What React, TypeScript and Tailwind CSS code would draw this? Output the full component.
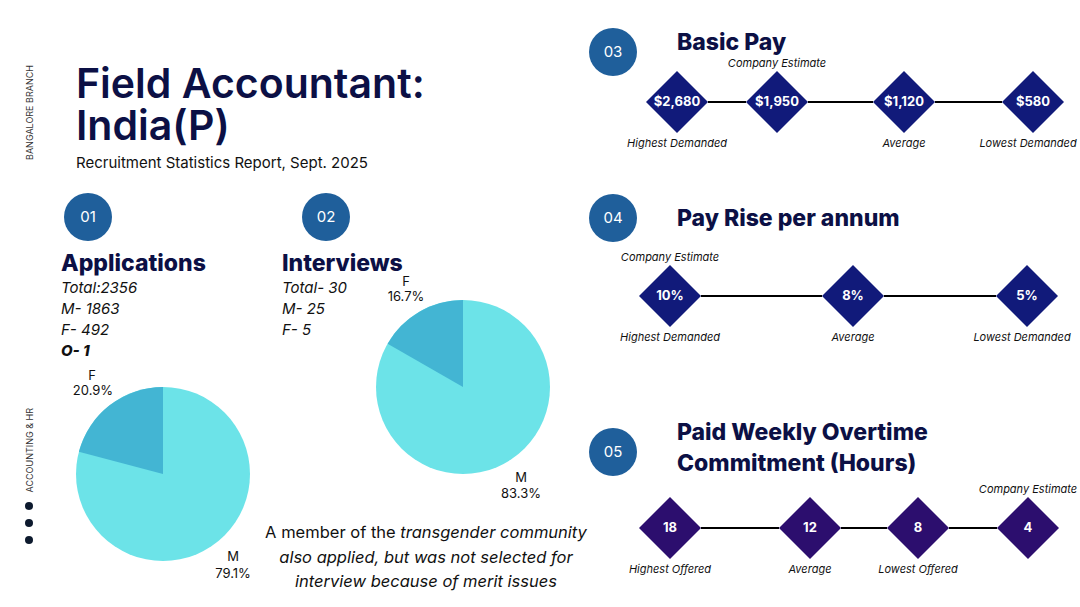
import React from 'react'

type Node = { value: string; above?: string; below?: string; shift?: string }

const Circle = ({ n, className = '' }: { n: string; className?: string }) => (
  <div
    className={`w-[48px] h-[48px] shrink-0 rounded-full bg-[#1f5f9b] flex items-center justify-center text-white text-[15px] ${className}`}
  >
    {n}
  </div>
)

const Timeline = ({ nodes, gaps, color }: { nodes: Node[]; gaps: number[]; color: string }) => (
  <div className="flex items-start">
    {nodes.map((node, i) => (
      <React.Fragment key={i}>
        <div className="w-[62px] shrink-0 flex flex-col items-center">
          <div className="h-[14px] leading-[14px] text-[11px] italic whitespace-nowrap text-[#111]">
            {node.above ?? ''}
          </div>
          <div
            className={`mt-[1px] w-[62px] h-[62px] flex items-center justify-center text-white text-[13px] font-bold [clip-path:polygon(50%_0,100%_50%,50%_100%,0_50%)] ${color}`}
          >
            {node.value}
          </div>
          <div
            className={`mt-[3px] h-[14px] leading-[14px] text-[11px] italic whitespace-nowrap text-[#111] ${node.shift ?? ''}`}
          >
            {node.below ?? ''}
          </div>
        </div>
        {i < gaps.length && (
          <div className="mt-[45px] h-[2px] bg-black shrink-0" style={{ width: gaps[i] }} />
        )}
      </React.Fragment>
    ))}
  </div>
)

const PieOne = () => (
  <svg width="200" height="225" viewBox="0 0 200 225" className="block">
    <circle cx="102" cy="113" r="87" fill="#6ce3e8" />
    <path d="M102,113 L17.87,90.83 A87,87 0 0 1 102,26 Z" fill="#43b5d3" />
    <g fontFamily="Inter, sans-serif" fontSize="13" fill="#111" textAnchor="middle">
      <text x="31" y="19">F</text>
      <text x="32" y="34">20.9%</text>
      <text x="172" y="200">M</text>
      <text x="172" y="217">79.1%</text>
    </g>
  </svg>
)

const PieTwo = () => (
  <svg width="180" height="232" viewBox="0 0 180 232" className="block">
    <circle cx="87" cy="118" r="87" fill="#6ce3e8" />
    <path d="M87,118 L11.6,74.65 A87,87 0 0 1 87,31 Z" fill="#43b5d3" />
    <g fontFamily="Inter, sans-serif" fontSize="13" fill="#111" textAnchor="middle">
      <text x="30" y="17">F</text>
      <text x="30" y="32">16.7%</text>
      <text x="145" y="213">M</text>
      <text x="145" y="229">83.3%</text>
    </g>
  </svg>
)

const App = () => {
  return (
    <div className="w-[1080px] h-[607px] overflow-hidden bg-white flex text-[#111] [font-family:Inter,'Noto_Sans',sans-serif]">
      {/* side strip */}
      <div className="w-[58px] shrink-0 flex flex-col items-center pt-[65px] text-[#333]">
        <div className="[writing-mode:vertical-rl] rotate-180 text-[9px] leading-none whitespace-nowrap">
          BANGALORE BRANCH
        </div>
        <div className="mt-[248px] [writing-mode:vertical-rl] rotate-180 text-[9px] leading-none whitespace-nowrap">
          ACCOUNTING &amp; HR
        </div>
        <div className="mt-[10px] flex flex-col gap-[9px]">
          <span className="w-[8px] h-[8px] rounded-full bg-[#0d1a2e]" />
          <span className="w-[8px] h-[8px] rounded-full bg-[#0d1a2e]" />
          <span className="w-[8px] h-[8px] rounded-full bg-[#0d1a2e]" />
        </div>
      </div>

      {/* left content */}
      <div className="w-[531px] shrink-0 pt-[62px]">
        <div className="pl-[18px]">
          <h1 className="text-[41px] leading-[42px] font-semibold text-[#0c1045]">
            Field Accountant:
            <br />
            India(P)
          </h1>
          <p className="mt-[7px] text-[15px] leading-[20px] text-[#111]">
            Recruitment Statistics Report, Sept. 2025
          </p>
        </div>

        <div className="mt-[20px] flex pl-[3px]">
          {/* applications */}
          <div className="w-[221px] shrink-0">
            <Circle n="01" className="ml-[3px]" />
            <h2 className="mt-[8px] text-[23px] leading-[28px] font-extrabold text-[#0c1045]">Applications</h2>
            <div className="text-[15px] leading-[21px] italic">
              <div>Total:2356</div>
              <div>M- 1863</div>
              <div>F- 492</div>
              <div className="font-extrabold">O- 1</div>
            </div>
            <PieOne />
          </div>

          {/* interviews */}
          <div className="flex-1">
            <Circle n="02" className="ml-[20px]" />
            <h2 className="mt-[8px] text-[23px] leading-[28px] font-extrabold text-[#0c1045]">Interviews</h2>
            <div className="flex items-start">
              <div className="w-[94px] shrink-0 text-[15px] leading-[21px] italic">
                <div>Total- 30</div>
                <div>M- 25</div>
                <div>F- 5</div>
              </div>
              <div className="-mt-[8px]">
                <PieTwo />
              </div>
            </div>
            <p className="mt-[19px] -ml-[26px] w-[340px] text-center text-[16.5px] leading-[24.5px]">
              A member of the <i>transgender community</i>
              <br />
              <i>also applied, but was not selected for</i>
              <br />
              <i>interview because of merit issues</i>
            </p>
          </div>
        </div>
      </div>

      {/* right content */}
      <div className="flex-1 pt-[28px]">
        {/* 03 */}
        <div className="flex">
          <Circle n="03" />
          <div className="ml-[40px]">
            <h2 className="text-[23px] leading-[28px] font-extrabold text-[#0c1045]">Basic Pay</h2>
            <div className="-ml-[31px]">
              <Timeline
                color="bg-[#111a7a]"
                gaps={[38, 65, 67]}
                nodes={[
                  { value: '$2,680', below: 'Highest Demanded' },
                  { value: '$1,950', above: 'Company Estimate' },
                  { value: '$1,120', below: 'Average' },
                  { value: '$580', below: 'Lowest Demanded', shift: '-translate-x-[5px]' },
                ]}
              />
            </div>
          </div>
        </div>

        {/* 04 */}
        <div className="mt-[44px]">
          <div className="flex items-center">
            <Circle n="04" />
            <h2 className="ml-[40px] text-[23px] leading-[28px] font-extrabold text-[#0c1045]">Pay Rise per annum</h2>
          </div>
          <div className="mt-[8px] ml-[50px]">
            <Timeline
              color="bg-[#111a7a]"
              gaps={[121, 112]}
              nodes={[
                { value: '10%', above: 'Company Estimate', below: 'Highest Demanded' },
                { value: '8%', below: 'Average' },
                { value: '5%', below: 'Lowest Demanded', shift: '-translate-x-[5px]' },
              ]}
            />
          </div>
        </div>

        {/* 05 */}
        <div className="mt-[73px]">
          <div className="flex items-center">
            <Circle n="05" className="mt-[8px]" />
            <h2 className="ml-[40px] text-[23px] leading-[31px] font-extrabold text-[#0c1045]">
              Paid Weekly Overtime
              <br />
              Commitment (Hours)
            </h2>
          </div>
          <div className="mt-[3px] ml-[50px]">
            <Timeline
              color="bg-[#2c0e6e]"
              gaps={[78, 46, 48]}
              nodes={[
                { value: '18', below: 'Highest Offered' },
                { value: '12', below: 'Average' },
                { value: '8', below: 'Lowest Offered' },
                { value: '4', above: 'Company Estimate' },
              ]}
            />
          </div>
        </div>
      </div>
    </div>
  )
}

export default App
